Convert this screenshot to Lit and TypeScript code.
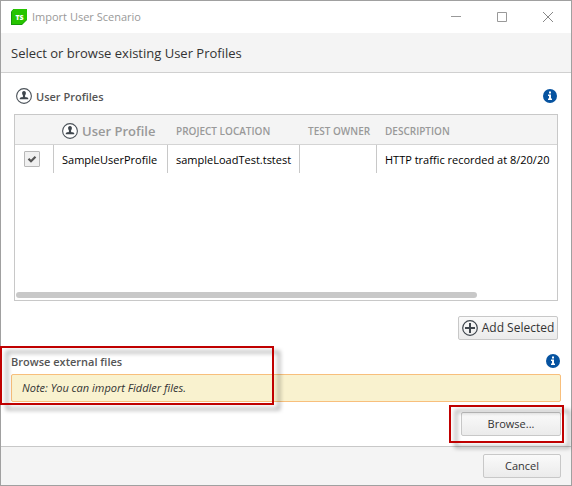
import { LitElement, html, css, svg } from "lit";
import { customElement, property, state } from "lit/decorators.js";

const userIcon = html`<svg class="round" viewBox="0 0 16 16" aria-hidden="true">
  <circle cx="8" cy="8" r="7.4" fill="#fff" stroke="#4b5259" stroke-width="1.1" />
  <path fill="#3f464d" d="M8 3c1.400 0 2 1 1.900 2.300-.1.900-.4 1.500-.8 2v1.600c.9.300 2.200.4 2.800.9.300.3.400.7.400 1.400H3.700c0-.7.1-1.100.4-1.400.6-.5 1.900-.6 2.800-.9V7.300c-.4-.5-.7-1.100-.8-2C6 4 6.600 3 8 3z" />
</svg>`;

const infoIcon = svg`<svg viewBox="0 0 14 14" width="14" height="14" aria-hidden="true">
  <circle cx="7" cy="7" r="7" fill="#0653a0" />
  <path fill="#fff" d="M6 2.500h2v2H6zM5 5.500h3v4h1v1.500H5V9.500h1V7H5z" />
</svg>`;

@customElement("info-button")
export class InfoButton extends LitElement {
  @property() label = "";
  static styles = css`
    :host { display: flex; }
    .info { display: flex; padding: 0; border: 0; background: none; border-radius: 50%; }
  `;
  render() {
    return html`<button class="info" aria-label=${this.label}>${infoIcon}</button>`;
  }
}

@customElement("app-root")
export class AppRoot extends LitElement {
  @state() private rows = [
    {
      checked: true,
      name: "SampleUserProfile",
      location: "sampleLoadTest.tstest",
      owner: "",
      description: "HTTP traffic recorded at 8/20/20",
    },
  ];

  static styles = css`
    :host {
      display: block;
      font-family: "Open Sans", "Noto Sans", sans-serif;
      font-size: 11px;
      line-height: 16px;
      color: #333;
    }
    * { box-sizing: border-box; }
    .window {
      display: flex;
      flex-direction: column;
      min-height: 100vh;
      border: 1px solid #a0a0a0;
      background: #fff;
    }
    .titlebar { display: flex; align-items: center; height: 32px; padding-left: 10px; color: #999; }
    .logo { width: 16px; height: 16px; margin-right: 5px; }
    .title { flex: 1; font-size: 11px; font-weight: 400; margin: 0; }
    .control {
      display: grid;
      place-items: center;
      width: 46px;
      height: 32px;
      padding: 0;
      border: 0;
      background: none;
    }
    .heading {
      margin: 0;
      padding: 8px 10px 7px;
      background: #f4f4f4;
      border-bottom: 1px solid #d0d0d0;
      color: #333;
      font-size: 13px;
      line-height: 24px;
      font-weight: 400;
    }
    .profiles { padding: 14px 13px 0; }
    .bar { display: flex; align-items: center; justify-content: space-between; }
    .profiles .bar { padding: 0 1px 0 2px; }
    .label {
      display: flex;
      align-items: center;
      gap: 4px;
      margin: 0;
      font-size: 11px;
      font-weight: 600;
      color: #555;
    }
    .caption { padding-top: 2px; }
    .round { width: 16px; height: 16px; flex: none; }
    .grid {
      display: flex;
      flex-direction: column;
      height: 187px;
      margin-top: 9px;
      border: 1px solid #c8c8c8;
      overflow: hidden;
    }
    table { width: 100%; table-layout: fixed; border-collapse: separate; border-spacing: 0; }
    th, td { padding: 0 0 0 8px; text-align: left; white-space: nowrap; }
    th {
      height: 30px;
      padding-top: 2px;
      background: #f4f4f4;
      border-bottom: 1px solid #d4d4d4;
      color: #999;
      font-size: 10px;
      font-weight: 600;
    }
    .main { display: flex; align-items: center; gap: 4px; font-size: 13px; }
    td { height: 28px; padding-top: 2px; border-right: 1px solid #c8c8c8; color: #000; }
    td:last-child { border-right: 0; }
    td:first-child { padding-top: 0; }
    .pick { width: 39px; }
    .name { width: 114px; }
    .location { width: 132px; }
    .owner { width: 77px; }
    .check {
      appearance: none;
      display: block;
      width: 16px;
      height: 16px;
      margin: 0 0 0 1px;
      border: 1px solid #b8b8b8;
      border-radius: 1px;
      background: #f0f0f0;
    }
    .tick { display: grid; }
    .tick > * { grid-area: 1 / 1; }
    .mark { width: 16px; height: 16px; margin-left: 1px; pointer-events: none; visibility: hidden; }
    .check:checked + .mark { visibility: visible; }
    .scroll { width: 85%; height: 6px; margin: auto 0 2px 1px; border-radius: 3px; background: #c8c8c8; }
    .actions { display: flex; justify-content: flex-end; }
    .profiles .actions { margin-top: 15px; }
    .button {
      display: flex;
      align-items: center;
      justify-content: center;
      gap: 4px;
      height: 24px;
      padding: 0 4px;
      border: 1px solid #c8c8c8;
      border-radius: 2px;
      background: linear-gradient(#fafafa, #ebebeb);
      color: #333;
      font: inherit;
      font-size: 12px;
      white-space: nowrap;
    }
    .plain { font-size: 11px; }
    .wide { width: 100px; }
    .cancel { width: 78px; }
    .external { padding: 12px 10px 10px; }
    .note {
      margin: 4px 0 10px;
      padding: 5px 10px;
      border: 1px solid #f8bf7c;
      border-radius: 2px;
      background: #f9f2cf;
      font-size: 11px;
      font-style: italic;
    }
    .external .bar { padding-right: 1px; }
    .footer {
      display: flex;
      flex: 1;
      justify-content: flex-end;
      align-items: flex-start;
      padding: 7px 10px 6px;
      border-top: 1px solid #c8c8c8;
      background: #f4f4f4;
    }
    .marked { position: relative; }
    .callout {
      position: absolute;
      border: 2px solid #c00000;
      filter: drop-shadow(6px 5px 2px rgba(0, 0, 0, 0.4));
      pointer-events: none;
    }
    .callout-note { left: -1px; top: 6px; width: 274px; height: 59px; }
    .callout-browse { right: -3px; top: -7px; width: 115px; height: 38px; }
  `;

  private toggle(index: number) {
    this.rows = this.rows.map((r, i) => (i === index ? { ...r, checked: !r.checked } : r));
  }

  render() {
    return html`
      <main class="window">
        <header class="titlebar">
          <svg class="logo" viewBox="0 0 16 16" aria-hidden="true">
            <path fill="#159a08" d="M2.500 0H16v11l-5 5H0V2.500z" />
            <path fill="#27c400" d="M3 0h13v10.500L11 15H1V2z" />
            <text x="8.500" y="10.500" text-anchor="middle" fill="#fff" font-size="7" font-weight="800">TS</text>
          </svg>
          <h1 class="title">Import User Scenario</h1>
          <button class="control" aria-label="Minimize">
            <svg width="10" height="10" stroke="#999"><path d="M0 4.500h10" /></svg>
          </button>
          <button class="control" aria-label="Maximize">
            <svg width="10" height="10" stroke="#999" fill="none"><path d="M.5 .5h9v9h-9z" /></svg>
          </button>
          <button class="control" aria-label="Close">
            <svg width="10" height="10" stroke="#888"><path d="M0 0l10 10M10 0L0 10" /></svg>
          </button>
        </header>
        <h2 class="heading">Select or browse existing User Profiles</h2>
        <section class="profiles">
          <div class="bar">
            <h3 class="label">${userIcon} <span class="caption">User Profiles</span></h3>
            <info-button label="About user profiles"></info-button>
          </div>
          <div class="grid">
            <table>
              <thead>
                <tr>
                  <th class="pick" aria-label="Selected"></th>
                  <th class="name"><span class="main">${userIcon} User Profile</span></th>
                  <th class="location">PROJECT LOCATION</th>
                  <th class="owner">TEST OWNER</th>
                  <th>DESCRIPTION</th>
                </tr>
              </thead>
              <tbody>
                ${this.rows.map(
                  (r, i) => html`<tr>
                    <td>
                      <label class="tick">
                        <input class="check" type="checkbox" aria-label=${r.name} .checked=${r.checked} @change=${() => this.toggle(i)} />
                        <svg class="mark" viewBox="0 0 16 16" aria-hidden="true">
                          <path d="M4.500 7.800l2.500 2.500 4.500-4.500" fill="none" stroke="#555" stroke-width="2.200" />
                        </svg>
                      </label>
                    </td>
                    <td>${r.name}</td>
                    <td>${r.location}</td>
                    <td>${r.owner}</td>
                    <td>${r.description}</td>
                  </tr>`
                )}
              </tbody>
            </table>
            <div class="scroll"></div>
          </div>
          <div class="actions">
            <button class="button wide">
              <svg class="round" viewBox="0 0 16 16" aria-hidden="true">
                <g fill="none" stroke="#3f464d"><circle cx="8" cy="8" r="7.300" stroke-width="1.200" /><path d="M8 3v10M3 8h10" stroke-width="2" /></g>
              </svg>
              Add Selected
            </button>
          </div>
        </section>
        <section class="external marked">
          <div class="bar">
            <h3 class="label"><span class="caption">Browse external files</span></h3>
            <info-button label="About external files"></info-button>
          </div>
          <p class="note">Note: You can import Fiddler files.</p>
          <div class="actions marked">
            <button class="button plain wide">Browse...</button>
            <div class="callout callout-browse"></div>
          </div>
          <div class="callout callout-note"></div>
        </section>
        <footer class="footer">
          <button class="button plain cancel">Cancel</button>
        </footer>
      </main>
    `;
  }
}
